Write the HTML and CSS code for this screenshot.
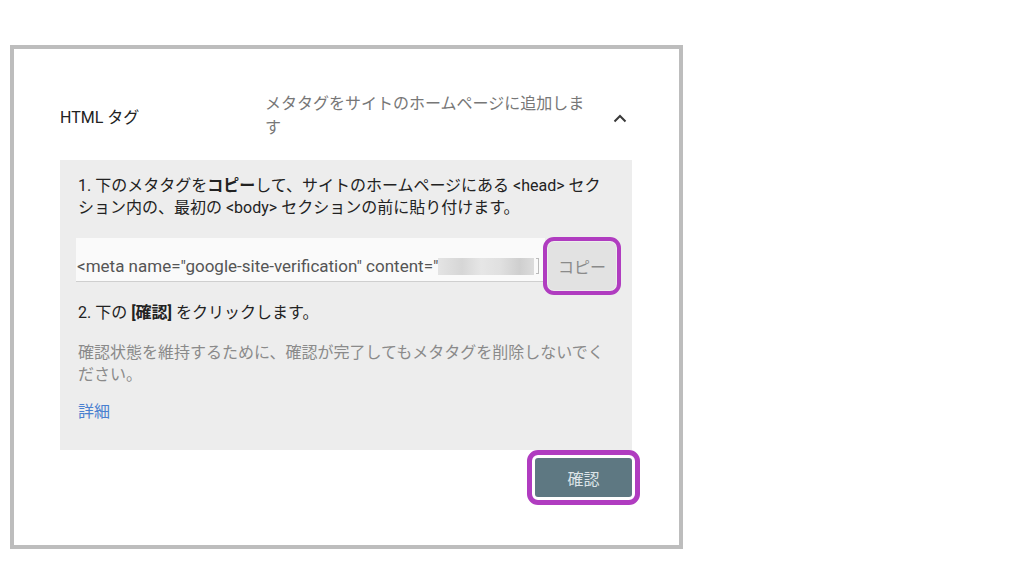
FILE: index.html
```html
<!DOCTYPE html>
<html lang="ja">
<head>
<meta charset="utf-8">
<link rel="stylesheet" href="styles.css">
</head>
<body>
<div class="frame">
  <div class="header">
    <div class="title">HTML タグ</div>
    <div class="desc">メタタグをサイトのホームページに追加します</div>
    <div class="toggle">
      <svg width="14" height="9" viewBox="0 0 14 9"><path d="M1.5 7.5 L7 2 L12.5 7.5" fill="none" stroke="#3a3a3a" stroke-width="2"/></svg>
    </div>
  </div>
  <div class="panel">
    <p class="step">1. 下のメタタグを<b>コピー</b>して、サイトのホームページにある &lt;head&gt; セクション内の、最初の &lt;body&gt; セクションの前に貼り付けます。</p>
    <div class="copyrow">
      <div class="field"><span class="code">&lt;meta name="google-site-verification" content="</span><span class="blur"></span><span class="tail"></span></div>
      <button class="copy">コピー</button>
    </div>
    <p class="step step2">2. 下の <b>[確認]</b> をクリックします。</p>
    <p class="note">確認状態を維持するために、確認が完了してもメタタグを削除しないでください。</p>
    <a class="more">詳細</a>
  </div>
  <div class="actions">
    <button class="confirm">確認</button>
  </div>
</div>
</body>
</html>
```
FILE: styles.css
```css
html, body {
  margin: 0;
  padding: 0;
  background: #fff;
}
body {
  font-family: Roboto, "Noto Sans CJK JP", sans-serif;
  font-size: 16px;
  color: #222;
}
.frame {
  box-sizing: border-box;
  margin: 45px 0 0 10px;
  width: 673px;
  height: 504px;
  border: 4px solid #bdbdbd;
  padding: 43px 47px 0 46px;
}
.header {
  display: flex;
  align-items: center;
  height: 48px;
}
.title {
  width: 205px;
  flex: none;
  line-height: 22px;
  color: #222;
  padding-top: 4px;
}
.desc {
  width: 330px;
  flex: none;
  line-height: 24px;
  color: #777;
}
.toggle {
  flex: 1;
  display: flex;
  justify-content: flex-end;
  padding-right: 5px;
  padding-top: 4px;
}
.toggle svg {
  display: block;
}
.panel {
  margin-top: 20px;
  background: #ededed;
  padding: 15px 16px 27px 16px;
}
.step {
  margin: 0;
  padding: 0 2px;
  line-height: 22px;
  color: #222;
}
.step b {
  font-weight: 700;
}
.copyrow {
  display: flex;
  margin-top: 19px;
  height: 52px;
}
.field {
  flex: 1;
  height: 44px;
  box-sizing: border-box;
  background: #fafafa;
  border-bottom: 1px solid #cfcfcf;
  display: flex;
  align-items: flex-end;
  padding: 0 0 5px 1px;
  margin-right: 3px;
  white-space: nowrap;
  overflow: hidden;
  color: #555;
  line-height: 20px;
}
.code {
  flex: none;
  font-size: 17px;
}
.blur {
  flex: none;
  width: 96px;
  height: 17px;
  margin-bottom: 1px;
  background: linear-gradient(90deg, #e4e4e4 0%, #d6d6d6 25%, #e6e6e6 45%, #e0e0e0 65%, #cfcfcf 85%, #dcdcdc 100%);
}
.tail {
  flex: none;
  width: 2px;
  height: 14px;
  margin: 0 0 2px 2px;
  border: 1px solid #bbb;
  border-left: none;
}
.copy {
  flex: none;
  width: 68px;
  height: 48px;
  margin-top: 4px;
  border: none;
  border-radius: 6px;
  background: #e2e2e2;
  color: #8a8a8a;
  font: inherit;
  font-size: 16px;
  padding: 0;
  outline: 4px solid #b03cc0;
  outline-offset: 1px;
}
.step2 {
  margin-top: 12px;
}
.note {
  margin: 18px 0 0 0;
  padding: 0 2px;
  line-height: 22px;
  color: #8a8a8a;
}
.more {
  display: block;
  margin-top: 15px;
  padding: 0 2px;
  line-height: 22px;
  color: #4a80d0;
}
.actions {
  display: flex;
  justify-content: flex-end;
  margin-top: 8px;
}
.confirm {
  width: 97px;
  height: 39px;
  border: none;
  border-radius: 3px;
  background: #5e7882;
  color: #dce4e8;
  font: inherit;
  font-size: 16px;
  padding: 0;
  outline: 5px solid #b03cc0;
  outline-offset: 3px;
}
```
